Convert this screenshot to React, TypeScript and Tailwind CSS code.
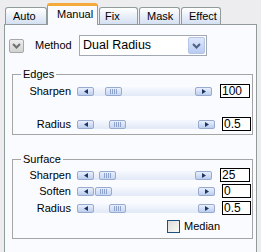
const tabs = [
  { name: "Auto", cls: "w-[42px] pl-[7px]" },
  { name: "Manual", cls: "w-[51px] pl-[9px]", active: true },
  { name: "Fix", cls: "ml-[1px] w-[39px] pl-[5px]" },
  { name: "Mask", cls: "ml-[1px] w-[41px] pl-[7px]" },
  { name: "Effect", cls: "ml-[1px] w-[40px] pl-[7px]" },
];

const edges = [
  { label: "Sharpen", value: "100", row: "mt-[4px]", thumb: "ml-[11px]", bar: "w-[135px]", box: "ml-[8px] w-[30px]" },
  { label: "Radius", value: "0.5", row: "mt-[19px]", thumb: "ml-[15px]", bar: "w-[138px]", box: "ml-[7px] w-[29px]" },
];

const surface = [
  { label: "Sharpen", value: "25", row: "mt-[3px]", thumb: "ml-[5px]", bar: "w-[135px]", box: "ml-[8px] w-[30px]" },
  { label: "Soften", value: "0", row: "mt-[2px]", thumb: "ml-[1px]", bar: "w-[138px]", box: "ml-[7px] w-[29px]" },
  { label: "Radius", value: "0.5", row: "mt-[3px]", thumb: "ml-[15px]", bar: "w-[138px]", box: "ml-[7px] w-[29px]" },
];

function Chevron({ color }: { color: string }) {
  return (
    <svg width="9" height="6" viewBox="0 0 9 6">
      <path d="M1 1 L4.5 4.5 L8 1" stroke={color} strokeWidth="2" fill="none" />
    </svg>
  );
}

function ArrowBtn({ dir }: { dir: "left" | "right" }) {
  return (
    <div className="flex h-[9px] w-[17px] shrink-0 items-center justify-center rounded-[2px] border border-[#98abcf] bg-gradient-to-b from-[#e9f0fd] to-[#bccdee]">
      <svg width="4" height="5" viewBox="0 0 4 5">
        {dir === "left" ? <path d="M0 2.5 L4 0 L4 5 Z" fill="#1d3564" /> : <path d="M4 2.5 L0 0 L0 5 Z" fill="#1d3564" />}
      </svg>
    </div>
  );
}

function Slider({ bar, thumb }: { bar: string; thumb: string }) {
  return (
    <div className={`flex h-[9px] items-center bg-gradient-to-b from-[#f6f9fe] to-[#e1e9f7] ${bar}`}>
      <ArrowBtn dir="left" />
      <div className="flex flex-1 items-center">
        <div className={`flex h-[9px] w-[17px] items-center justify-center gap-[1px] rounded-[2px] border border-[#98abcf] bg-gradient-to-b from-[#e9f0fd] to-[#c6d5f1] ${thumb}`}>
          <span className="h-[5px] w-px bg-[#8ea3cb]" />
          <span className="h-[5px] w-px bg-[#8ea3cb]" />
          <span className="h-[5px] w-px bg-[#8ea3cb]" />
          <span className="h-[5px] w-px bg-[#8ea3cb]" />
        </div>
      </div>
      <ArrowBtn dir="right" />
    </div>
  );
}

type Row = { label: string; value: string; row: string; thumb: string; bar: string; box: string };

function SliderRow({ r }: { r: Row }) {
  return (
    <div className={`flex h-[14px] items-center ${r.row}`}>
      <span className="w-[58px] text-right text-[11px] leading-[12px]">{r.label}</span>
      <div className="ml-[6px]">
        <Slider bar={r.bar} thumb={r.thumb} />
      </div>
      <div className={`flex h-[14px] items-center border border-black bg-white pl-[1px] text-[12px] leading-[12px] ${r.box}`}>
        {r.value}
      </div>
    </div>
  );
}

export default function App() {
  return (
    <div className="flex h-[252px] w-[261px] flex-col overflow-hidden bg-[#ededf0] font-['Liberation_Sans',Arial,sans-serif] text-black">
      <div className="flex h-[24px] items-end pl-[5px]">
        {tabs.map((t) =>
          t.active ? (
            <div
              key={t.name}
              className={`relative z-10 -mb-px flex h-[22px] items-center rounded-t-[3px] border-x border-t-[3px] border-x-[#919b9c] border-t-[#f4a93a] bg-[#fafbfe] pb-[2px] text-[11px] ${t.cls}`}
            >
              {t.name}
            </div>
          ) : (
            <div
              key={t.name}
              className={`flex h-[17px] items-center rounded-t-[3px] border-x border-t border-[#919b9c] bg-gradient-to-b from-[#ffffff] to-[#d5e0f2] pt-[1px] text-[11px] ${t.cls}`}
            >
              {t.name}
            </div>
          )
        )}
      </div>

      <div className="ml-[4px] flex w-[253px] flex-1 flex-col border-x border-t border-[#919b9c] bg-[#fafbfe] pt-[10px]">
        <div className="flex h-[21px] items-center">
          <div className="ml-[4px] flex h-[14px] w-[15px] items-center justify-center rounded-[2px] border border-[#a7a7a7] bg-gradient-to-b from-[#eeeeee] to-[#d2d2d2]">
            <Chevron color="#707070" />
          </div>
          <span className="ml-[11px] w-[44px] text-[11px]">Method</span>
          <div className="flex h-[21px] w-[128px] items-center border border-[#a3a9b3] bg-white">
            <span className="flex-1 pl-[3px] text-[12.5px]">Dual Radius</span>
            <div className="mr-[1px] flex h-[17px] w-[17px] items-center justify-center rounded-[2px] border border-[#b5c5e6] bg-gradient-to-b from-[#dfe8fb] to-[#b8cbf1]">
              <Chevron color="#4d6185" />
            </div>
          </div>
        </div>

        <fieldset className="ml-[7px] mr-[3px] mt-[12px] border border-[#a5a5a5] pb-[3px]">
          <legend className="ml-[8px] px-[2px] text-[11px] leading-[12px]">Edges</legend>
          {edges.map((r) => (
            <SliderRow key={r.label} r={r} />
          ))}
        </fieldset>

        <fieldset className="ml-[7px] mr-[3px] mt-[18px] border border-[#a5a5a5] pb-[5px]">
          <legend className="ml-[8px] px-[2px] text-[11px] leading-[12px]">Surface</legend>
          {surface.map((r) => (
            <SliderRow key={r.label} r={r} />
          ))}
          <div className="ml-[154px] mt-[5px] flex h-[13px] items-center">
            <div className="h-[13px] w-[13px] border border-[#1c5180] bg-gradient-to-br from-[#dcdcd7] to-[#fbfbf9]" />
            <span className="ml-[4px] text-[11px]">Median</span>
          </div>
        </fieldset>
      </div>
    </div>
  );
}
